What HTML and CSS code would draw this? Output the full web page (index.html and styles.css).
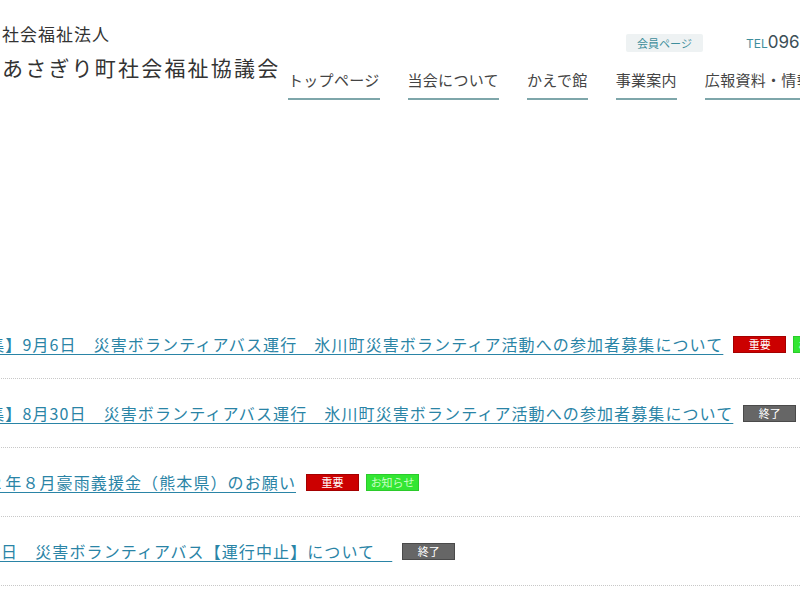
FILE: index.html
```html
<!DOCTYPE html>
<html lang="ja">
<head>
<meta charset="utf-8">
<title>あさぎり町社会福祉協議会</title>
<link rel="stylesheet" href="styles.css">
</head>
<body>
<div class="page">
  <header class="site-header">
    <div class="logo">
      <p class="logo-sub">社会福祉法人</p>
      <p class="logo-main">あさぎり町社会福祉協議会</p>
    </div>
    <div class="header-right">
      <div class="utility">
        <a class="member-btn" href="#">会員ページ</a>
        <p class="tel"><span class="tel-label">TEL</span>0966-45-0000</p>
      </div>
      <nav class="global-nav">
        <ul>
          <li><a href="#">トップページ</a></li>
          <li><a href="#">当会について</a></li>
          <li><a href="#">かえで館</a></li>
          <li><a href="#">事業案内</a></li>
          <li><a href="#">広報資料・情報</a></li>
        </ul>
      </nav>
    </div>
  </header>

  <main class="main">
    <ul class="news-list">
      <li class="news-item">
        <a href="#">【募集】9月6日　災害ボランティアバス運行　氷川町災害ボランティア活動への参加者募集について</a>
        <span class="tag tag-important">重要</span>
        <span class="tag tag-notice">お知らせ</span>
      </li>
      <li class="news-item">
        <a href="#">【募集】8月30日　災害ボランティアバス運行　氷川町災害ボランティア活動への参加者募集について</a>
        <span class="tag tag-closed">終了</span>
      </li>
      <li class="news-item">
        <a href="#">令和２年８月豪雨義援金（熊本県）のお願い</a>
        <span class="tag tag-important">重要</span>
        <span class="tag tag-notice">お知らせ</span>
      </li>
      <li class="news-item">
        <a href="#">9月13日　災害ボランティアバス【運行中止】について　</a>
        <span class="tag tag-closed">終了</span>
      </li>
    </ul>
  </main>
</div>
</body>
</html>
```

FILE: styles.css
```css
* {
  box-sizing: border-box;
}

html, body {
  margin: 0;
  padding: 0;
  background: #fff;
  overflow: hidden;
}

body {
  font-family: "Noto Sans CJK JP", "Noto Sans", sans-serif;
  color: #333;
}

p, ul {
  margin: 0;
  padding: 0;
}

ul {
  list-style: none;
}

a {
  text-decoration: none;
  color: inherit;
}

.page {
  width: 1200px;
}

/* ---------- header ---------- */
.site-header {
  display: flex;
  align-items: flex-start;
  height: 310px;
  padding-left: 2px;
}

.logo {
  padding-top: 23px;
  width: 286px;
  flex-shrink: 0;
}

.logo-sub {
  font-size: 17px;
  line-height: 22px;
  letter-spacing: 1px;
  color: #333;
}

.logo-main {
  margin-top: 8px;
  font-size: 21px;
  line-height: 28px;
  letter-spacing: 2.2px;
  color: #333;
}

.header-right {
  display: flex;
  flex-direction: column;
}

.utility {
  display: flex;
  align-items: center;
  padding-left: 338px;
  padding-top: 33px;
  gap: 43px;
  height: 52px;
}

.member-btn {
  display: inline-block;
  width: 77px;
  height: 18px;
  line-height: 18px;
  text-align: center;
  font-size: 11px;
  color: #3f8e9c;
  background: #eef2f3;
  border-radius: 2px;
}

.tel {
  font-family: "Inter", "Noto Sans", sans-serif;
  font-size: 17px;
  line-height: 20px;
  color: #3c4f57;
  white-space: nowrap;
}

.tel-label {
  font-size: 12px;
  color: #3f8e9c;
}

.global-nav ul {
  display: flex;
  gap: 28px;
  margin-top: 17px;
}

.global-nav a {
  display: block;
  font-size: 15px;
  line-height: 21px;
  letter-spacing: 0.3px;
  color: #444;
  padding-bottom: 8px;
  border-bottom: 2px solid #7ea6aa;
  white-space: nowrap;
}

/* ---------- news ---------- */
.news-list {
  margin-left: -46px;
}

.news-item {
  display: flex;
  align-items: center;
  padding: 22px 0;
  height: 69px;
  border-bottom: 1px dotted #c8c8c8;
  white-space: nowrap;
}

.news-item a {
  font-size: 16px;
  line-height: 24px;
  letter-spacing: 1.1px;
  color: #2a84a6;
  text-decoration: underline;
  text-decoration-color: #2a84a6;
  text-underline-offset: 3px;
}

.tag {
  display: inline-block;
  width: 53px;
  height: 17px;
  line-height: 15px;
  font-size: 11px;
  text-align: center;
  color: #fff;
  margin-left: 7px;
  border: 1px solid transparent;
  flex-shrink: 0;
}

.news-item a + .tag {
  margin-left: 10px;
}

.tag-important {
  background: #cc0000;
  border-color: #a40000;
}

.tag-notice {
  background: #33e633;
  border-color: #2bcb2b;
  color: #c9ffc4;
}

.tag-closed {
  background: #666;
  border-color: #4a4a4a;
}
```
